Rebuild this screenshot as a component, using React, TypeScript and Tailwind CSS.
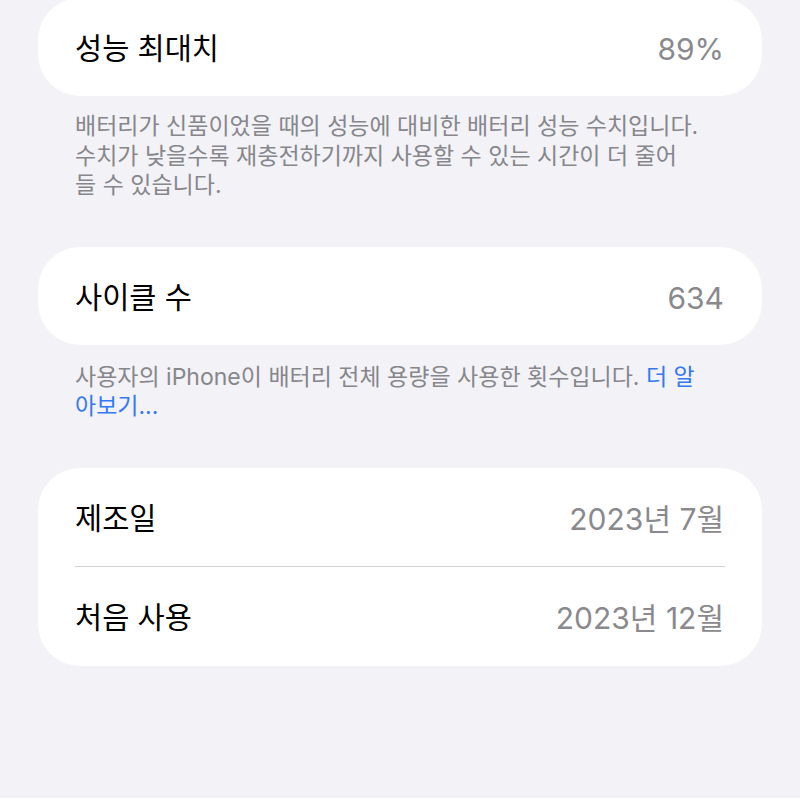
import React from "react";

function Row({ label, value, h = "h-[98px]" }: { label: string; value: string; h?: string }) {
  return (
    <div className={`flex ${h} items-center justify-between pl-[37px] pr-[38px] pt-[4px]`}>
      <span className="text-[29.5px] leading-none text-black">{label}</span>
      <span className="text-[30px] leading-none text-[#8a8a8e]">{value}</span>
    </div>
  );
}

export default function App() {
  return (
    <div
      className="min-h-[800px] w-full bg-[#f2f2f7] px-[38px] antialiased"
      style={{ fontFamily: 'Inter, "Noto Sans CJK KR", "Noto Sans", sans-serif' }}
    >
      <div className="-mt-[2px] overflow-hidden rounded-[42px] bg-white">
        <Row label="성능 최대치" value="89%" />
      </div>
      <p className="mt-[16px] whitespace-nowrap pl-[37px] text-[23px] leading-[29.5px] text-[#86868b]">
        배터리가 신품이었을 때의 성능에 대비한 배터리 성능 수치입니다.
        <br />
        수치가 낮을수록 재충전하기까지 사용할 수 있는 시간이 더 줄어
        <br />
        들 수 있습니다.
      </p>

      <div className="mt-[46px] overflow-hidden rounded-[42px] bg-white">
        <Row label="사이클 수" value="634" />
      </div>
      <p className="mt-[18px] whitespace-nowrap pl-[37px] text-[23px] leading-[29.5px] text-[#86868b]">
        사용자의 iPhone이 배터리 전체 용량을 사용한 횟수입니다.{" "}
        <span className="text-[#3478f6]">더 알</span>
        <br />
        <span className="text-[#3478f6]">아보기...</span>
      </p>

      <div className="mt-[46px] overflow-hidden rounded-[42px] bg-white">
        <Row label="제조일" value="2023년 7월" />
        <div className="ml-[37px] mr-[37px] h-px bg-[#d6d6da]" />
        <Row label="처음 사용" value="2023년 12월" h="h-[99px]" />
      </div>
    </div>
  );
}
